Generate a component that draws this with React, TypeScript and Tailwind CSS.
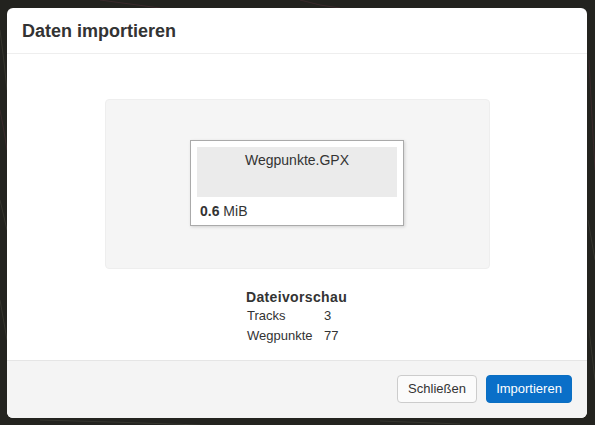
export default function App() {
  return (
    <div className="relative h-[425px] w-[595px] overflow-hidden bg-[#23231f] pl-[7px] pt-2 font-['Liberation_Sans',Arial,sans-serif] text-[#333333]">
      {/* dimmed map behind the dialog */}
      <svg className="absolute inset-0" width="595" height="425" fill="none">
        <path d="M100 0 L160 8 M300 0 Q320 6 340 8 M0 110 Q4 130 7 150 M589 60 Q592 120 595 170" stroke="#3a2a2c" strokeWidth="1" />
        <path d="M0 30 Q4 60 7 90 M0 200 L7 230 M0 300 L7 340 M588 220 L595 260 M589 330 L595 380 M40 420 Q120 422 200 425 M380 421 L460 424" stroke="#36362f" strokeWidth="1" />
      </svg>
      <div className="relative flex h-[410px] w-[580px] flex-col overflow-hidden rounded-md bg-white">
        <div className="flex h-[46px] shrink-0 items-center border-b border-[#eeeeee] px-[15px]">
          <h1 className="text-lg font-bold leading-[20px] text-[#333333]">Daten importieren</h1>
        </div>
        <div className="flex flex-1 flex-col items-center pt-[45px]">
          <div className="flex h-[170px] w-[385px] items-center justify-center rounded border border-[#eeeeee] bg-[#f5f5f5] pb-[2px]">
            <div className="h-[86px] w-[214px] border border-[#aaaaaa] bg-white px-[6px] pt-[6px] shadow-[1px_1px_3px_rgba(0,0,0,0.15)]">
              <div className="h-[50px] bg-[#ebebeb] pt-[3px] text-center text-sm leading-[20px]">Wegpunkte.GPX</div>
              <div className="mt-[4px] pl-[3px] text-sm leading-[20px]">
                <b>0.6</b> MiB
              </div>
            </div>
          </div>
          <div className="mt-[18px] w-[102px] text-[13px] leading-[20px]">
            <div className="text-sm font-bold tracking-[0.35px]">Dateivorschau</div>
            <div className="mt-[-1px] flex"><span className="w-[78px] pl-px">Tracks</span><span>3</span></div>
            <div className="flex"><span className="w-[78px] pl-px">Wegpunkte</span><span>77</span></div>
          </div>
        </div>
        <div className="flex h-[58px] shrink-0 items-center justify-end gap-[9px] border-t border-[#e5e5e5] bg-[#f4f4f4] px-[15px] pb-px">
          <button className="h-[28px] w-[80px] rounded border border-[#cccccc] bg-[#fbfbfb] text-[13px] text-[#333333]">Schließen</button>
          <button className="h-[28px] w-[86px] rounded border border-[#0a6fc2] bg-[#0a6fc8] text-[13px] text-white">Importieren</button>
        </div>
      </div>
    </div>
  )
}
